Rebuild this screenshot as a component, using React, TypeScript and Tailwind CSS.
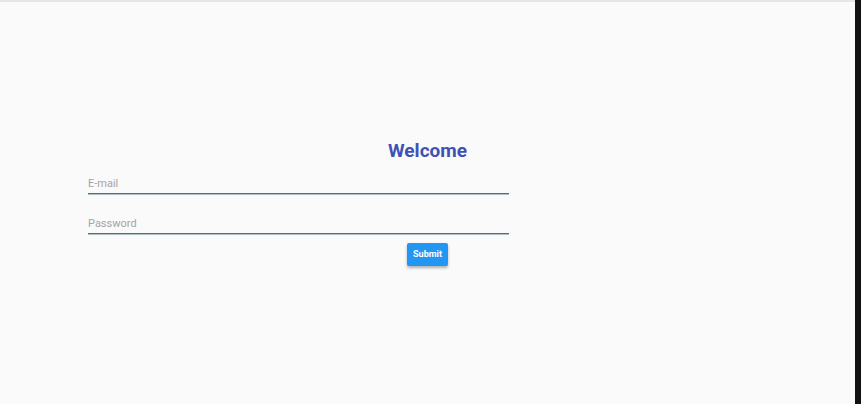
import React from "react";

const LoginPage: React.FC = () => {
  return (
    <div className="flex h-[404px] w-[861px] font-['Roboto',sans-serif]">
      <div className="flex-1 bg-[#fafafa] border-t-2 border-[#e6e6e6] pt-[135px]">
        <div className="flex justify-center">
          <h1 className="text-[19px] leading-[28px] font-bold text-[#3f51b5]">Welcome</h1>
        </div>
        <form className="mt-[8px]" onSubmit={(e) => e.preventDefault()}>
          <div className="ml-[88px] w-[421px] flex flex-col gap-[20px]">
            <input
              type="email"
              placeholder="E-mail"
              className="h-[21px] w-full bg-transparent border-b border-[#546e7a] shadow-[0_1px_0_#b0bec5] text-[11px] text-gray-800 placeholder:text-[#a3a3a3] outline-none"
            />
            <input
              type="password"
              placeholder="Password"
              className="h-[20px] w-full bg-transparent border-b border-[#546e7a] shadow-[0_1px_0_#b0bec5] text-[11px] text-gray-800 placeholder:text-[#a3a3a3] outline-none"
            />
          </div>
          <div className="flex justify-center mt-[9px]">
            <button
              type="submit"
              className="h-[23px] w-[41px] rounded-[2px] bg-[#2196f3] text-white text-[9px] font-bold shadow-[0_2px_3px_rgba(0,0,0,0.3)]"
            >
              Submit
            </button>
          </div>
        </form>
      </div>
      <div className="w-[6px] bg-[#121212]" />
    </div>
  );
};

export default function App() {
  return <LoginPage />;
}
